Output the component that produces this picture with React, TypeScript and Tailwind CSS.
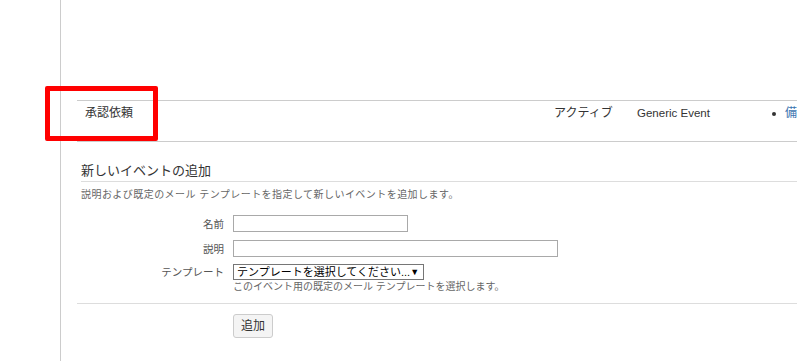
import React from "react";

const font = "font-['Liberation_Sans','Noto_Sans_CJK_JP',sans-serif]";

function EventRow() {
  return (
    <div className="flex h-[42px] border-y border-[#cccccc] text-[12px] leading-[16px] text-[#333] whitespace-nowrap">
      <div className="w-[477px] shrink-0 pl-2 pt-[4px]">承認依頼</div>
      <div className="w-[83px] shrink-0 pt-[4px]">アクティブ</div>
      <div className="w-[130px] shrink-0 pt-[4px] text-[11.5px]">Generic Event</div>
      <div className="flex shrink-0 items-start gap-[9px] pl-[5px] pt-[4px]">
        <span className="mt-[7px] h-[4px] w-[4px] rounded-full bg-[#333]" />
        <span className="text-[#3b73af]">備考</span>
      </div>
    </div>
  );
}

function FormRow({ label, children }: { label: string; children: React.ReactNode }) {
  return (
    <div className="flex items-center gap-[9px]">
      <div className="w-[143px] shrink-0 text-right text-[10.5px] leading-[14px] text-[#555]">{label}</div>
      {children}
    </div>
  );
}

function AddEventForm() {
  return (
    <div>
      <div className="ml-1 mt-[20px] border-b border-[#dddddd] pb-[1px] text-[13px] leading-[18px] text-[#333]">
        新しいイベントの追加
      </div>
      <p className="ml-1 mt-[6px] text-[10px] leading-[14px] tracking-[0.45px] text-[#666] whitespace-nowrap">
        説明および既定のメール テンプレートを指定して新しいイベントを追加します。
      </p>

      <div className="ml-1 mt-[13px] flex flex-col gap-[8px]">
        <FormRow label="名前">
          <input className="h-[17px] w-[175px] border border-[#a9a9a9] bg-white outline-none" />
        </FormRow>
        <FormRow label="説明">
          <input className="h-[17px] w-[325px] border border-[#a9a9a9] bg-white outline-none" />
        </FormRow>
      </div>

      <div className="ml-1 mt-[7px]">
        <FormRow label="テンプレート">
          <div className="flex h-[16px] w-[191px] items-center justify-between border border-[#767676] bg-white pl-[3px] pr-[4px] text-[11px] leading-[14px] text-black whitespace-nowrap">
            <span>テンプレートを選択してください...</span>
            <span className="text-[9px]">▼</span>
          </div>
        </FormRow>
        <div className="ml-[152px] mt-[1px] text-[10px] leading-[12px] text-[#666] whitespace-nowrap">
          このイベント用の既定のメール テンプレートを選択します。
        </div>
      </div>

      <div className="mt-[10px] border-t border-[#dddddd]" />

      <div className="mt-[9px] pl-[156px]">
        <button className="h-[24px] w-[40px] rounded-[3px] border border-[#cccccc] bg-[#f4f4f4] text-[12px] text-[#333]">
          追加
        </button>
      </div>
    </div>
  );
}

export default function App() {
  return (
    <div className={`relative flex h-[361px] w-[797px] overflow-hidden bg-white ${font}`}>
      <div className="w-[61px] shrink-0 border-r border-[#cccccc]" />
      <div className="min-w-0 flex-1 pl-4">
        <div className="mt-[100px] w-[900px]">
          <EventRow />
        </div>
        <AddEventForm />
      </div>
      {/* annotation highlight */}
      <div className="absolute left-[45px] top-[86px] h-[55px] w-[113px] rounded-[2px] border-[5px] border-[#ff0000]" />
    </div>
  );
}
